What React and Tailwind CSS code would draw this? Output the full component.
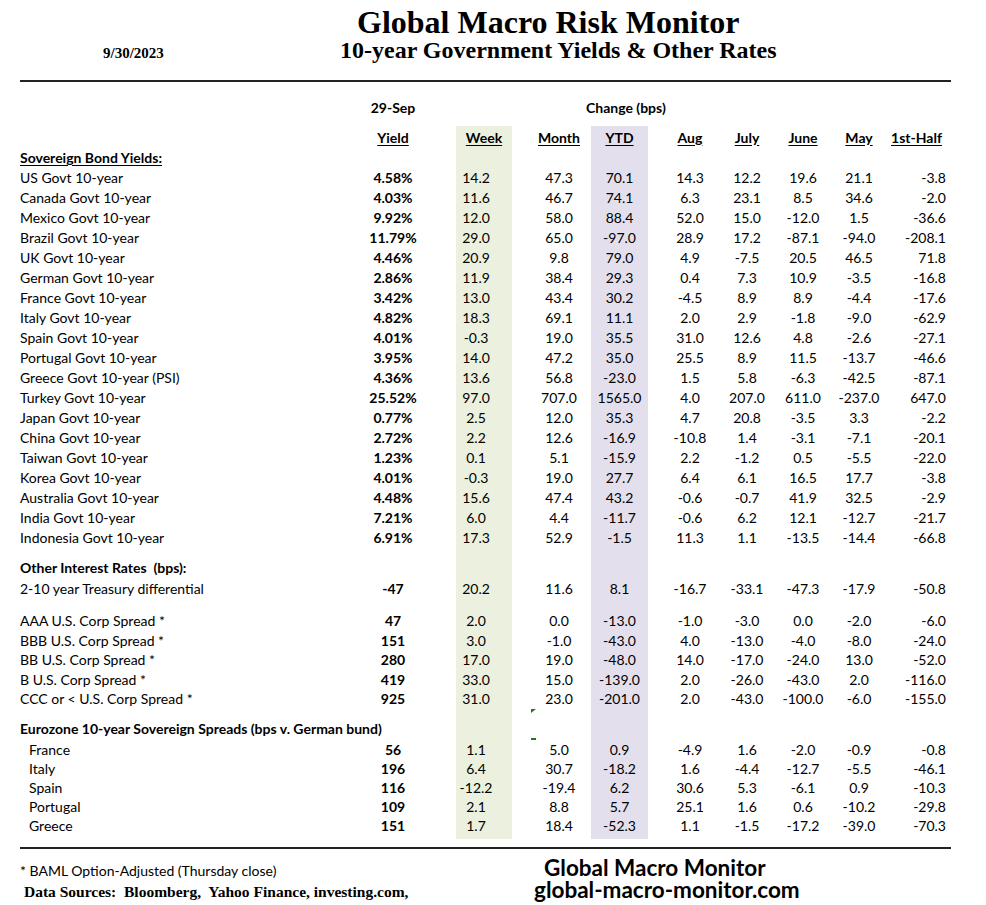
const sovereign = [
  ["US Govt 10-year", "4.58%", "14.2", "47.3", "70.1", "14.3", "12.2", "19.6", "21.1", "-3.8"],
  ["Canada Govt 10-year", "4.03%", "11.6", "46.7", "74.1", "6.3", "23.1", "8.5", "34.6", "-2.0"],
  ["Mexico Govt 10-year", "9.92%", "12.0", "58.0", "88.4", "52.0", "15.0", "-12.0", "1.5", "-36.6"],
  ["Brazil Govt 10-year", "11.79%", "29.0", "65.0", "-97.0", "28.9", "17.2", "-87.1", "-94.0", "-208.1"],
  ["UK Govt 10-year", "4.46%", "20.9", "9.8", "79.0", "4.9", "-7.5", "20.5", "46.5", "71.8"],
  ["German Govt 10-year", "2.86%", "11.9", "38.4", "29.3", "0.4", "7.3", "10.9", "-3.5", "-16.8"],
  ["France Govt 10-year", "3.42%", "13.0", "43.4", "30.2", "-4.5", "8.9", "8.9", "-4.4", "-17.6"],
  ["Italy Govt 10-year", "4.82%", "18.3", "69.1", "11.1", "2.0", "2.9", "-1.8", "-9.0", "-62.9"],
  ["Spain Govt 10-year", "4.01%", "-0.3", "19.0", "35.5", "31.0", "12.6", "4.8", "-2.6", "-27.1"],
  ["Portugal Govt 10-year", "3.95%", "14.0", "47.2", "35.0", "25.5", "8.9", "11.5", "-13.7", "-46.6"],
  ["Greece Govt 10-year (PSI)", "4.36%", "13.6", "56.8", "-23.0", "1.5", "5.8", "-6.3", "-42.5", "-87.1"],
  ["Turkey Govt 10-year", "25.52%", "97.0", "707.0", "1565.0", "4.0", "207.0", "611.0", "-237.0", "647.0"],
  ["Japan Govt 10-year", "0.77%", "2.5", "12.0", "35.3", "4.7", "20.8", "-3.5", "3.3", "-2.2"],
  ["China Govt 10-year", "2.72%", "2.2", "12.6", "-16.9", "-10.8", "1.4", "-3.1", "-7.1", "-20.1"],
  ["Taiwan Govt 10-year", "1.23%", "0.1", "5.1", "-15.9", "2.2", "-1.2", "0.5", "-5.5", "-22.0"],
  ["Korea Govt 10-year", "4.01%", "-0.3", "19.0", "27.7", "6.4", "6.1", "16.5", "17.7", "-3.8"],
  ["Australia Govt 10-year", "4.48%", "15.6", "47.4", "43.2", "-0.6", "-0.7", "41.9", "32.5", "-2.9"],
  ["India Govt 10-year", "7.21%", "6.0", "4.4", "-11.7", "-0.6", "6.2", "12.1", "-12.7", "-21.7"],
  ["Indonesia Govt 10-year", "6.91%", "17.3", "52.9", "-1.5", "11.3", "1.1", "-13.5", "-14.4", "-66.8"],
];

const corp = [
  ["AAA U.S. Corp Spread *", "47", "2.0", "0.0", "-13.0", "-1.0", "-3.0", "0.0", "-2.0", "-6.0"],
  ["BBB U.S. Corp Spread *", "151", "3.0", "-1.0", "-43.0", "4.0", "-13.0", "-4.0", "-8.0", "-24.0"],
  ["BB U.S. Corp Spread *", "280", "17.0", "19.0", "-48.0", "14.0", "-17.0", "-24.0", "13.0", "-52.0"],
  ["B U.S. Corp Spread *", "419", "33.0", "15.0", "-139.0", "2.0", "-26.0", "-43.0", "2.0", "-116.0"],
  ["CCC or < U.S. Corp Spread *", "925", "31.0", "23.0", "-201.0", "2.0", "-43.0", "-100.0", "-6.0", "-155.0"],
];

const euro = [
  ["France", "56", "1.1", "5.0", "0.9", "-4.9", "1.6", "-2.0", "-0.9", "-0.8"],
  ["Italy", "196", "6.4", "30.7", "-18.2", "1.6", "-4.4", "-12.7", "-5.5", "-46.1"],
  ["Spain", "116", "-12.2", "-19.4", "6.2", "30.6", "5.3", "-6.1", "0.9", "-10.3"],
  ["Portugal", "109", "2.1", "8.8", "5.7", "25.1", "1.6", "0.6", "-10.2", "-29.8"],
  ["Greece", "151", "1.7", "18.4", "-52.3", "1.1", "-1.5", "-17.2", "-39.0", "-70.3"],
];

const cell = "shrink-0 self-stretch flex items-center justify-center";

function Row({ r = [], h, labelCls = "", head = false, marker }) {
  const [label, yld, week, month, ytd, aug, july, june, may, half] = r;
  return (
    <div className={`flex ${h}`}>
      <div className={`w-[345px] shrink-0 flex items-center whitespace-pre ${labelCls}`}>{label}</div>
      <div className={`w-[56px] font-bold ${cell}`}>{yld}</div>
      <div className={`ml-[35px] w-[56px] bg-[#ebf1de] ${cell} ${head ? "" : "pr-4"}`}>{week}</div>
      <div className={`relative ml-[19px] w-[56px] ${cell}`}>
        {marker === "tri" && (
          <span className="absolute left-0 top-0 w-0 h-0 border-t-[4px] border-r-[5px] border-t-[#1e7b1e] border-r-transparent" />
        )}
        {marker === "dash" && <span className="absolute left-0 -top-[2px] w-[5px] h-[2px] bg-[#1e7b1e]" />}
        {month}
      </div>
      <div className={`ml-[4px] w-[57px] bg-[#e4dfec] ${cell}`}>{ytd}</div>
      <div className={`ml-[14px] w-[56px] ${cell}`}>{aug}</div>
      <div className={`ml-[1px] w-[56px] ${cell}`}>{july}</div>
      <div className={`w-[56px] ${cell}`}>{june}</div>
      <div className={`w-[56px] ${cell}`}>{may}</div>
      <div className={`w-[59px] shrink-0 self-stretch flex items-center ${head ? "justify-center" : "justify-end"}`}>{half}</div>
    </div>
  );
}

const U = ({ children }) => <span className="font-bold underline underline-offset-2">{children}</span>;

export default function App() {
  return (
    <div className="w-[986px] h-[905px] bg-white text-black overflow-hidden font-['Lato',sans-serif] text-[14px]">
      {/* title block */}
      <div className="pt-[6px] font-['Liberation_Serif',serif] font-bold">
        <div className="pl-[357px] text-[32px] leading-[32px]">Global Macro Risk Monitor</div>
        <div className="flex items-baseline">
          <div className="pl-[103px] w-[340px] text-[15px] leading-[24px]">9/30/2023</div>
          <div className="text-[24px] leading-[24px]">10-year Government Yields &amp; Other Rates</div>
        </div>
      </div>
      <div className="mt-[15px] mx-[20px] w-[931px] h-[2px] bg-[#222]" />

      <div className="pl-[20px]">
        <div className="mt-[15px] flex h-5 items-center font-bold">
          <div className="w-[345px] shrink-0" />
          <div className="w-[56px] shrink-0 text-center">29-Sep</div>
          <div className="ml-[165px]">Change (bps)</div>
        </div>

        <div className="mt-[9px]">
          <Row
            h="h-[22px]"
            head
            r={["", <U>Yield</U>, <U>Week</U>, <U>Month</U>, <U>YTD</U>, <U>Aug</U>, <U>July</U>, <U>June</U>, <U>May</U>, <U>1st-Half</U>]}
          />
          <Row h="h-[19px]" r={["Sovereign Bond Yields:"]} labelCls="font-bold underline underline-offset-2" />
          {sovereign.map((r) => (
            <Row key={r[0]} h="h-5" r={r} />
          ))}
          <Row h="h-[9px]" />
          <Row h="h-[22px]" r={["Other Interest Rates  (bps):"]} labelCls="font-bold" />
          <Row h="h-5" r={["2-10 year Treasury differential", "-47", "20.2", "11.6", "8.1", "-16.7", "-33.1", "-47.3", "-17.9", "-50.8"]} />
          <Row h="h-[13px]" />
          {corp.map((r) => (
            <Row key={r[0]} h="h-[19.5px]" r={r} />
          ))}
          <Row h="h-[9.5px]" marker="tri" />
          <Row h="h-[21.5px]" r={["Eurozone 10-year Sovereign Spreads (bps v. German bund)"]} labelCls="font-bold" />
          {euro.map((r, i) => (
            <Row key={r[0]} h="h-[19px]" r={r} labelCls="pl-[9px]" marker={i === 0 ? "dash" : undefined} />
          ))}
          <Row h="h-[4.5px]" />
        </div>
      </div>

      <div className="mt-[8px] mx-[20px] w-[931px] h-[2px] bg-[#222]" />

      <div className="flex">
        <div className="pl-[20px] w-[534px] pt-[12px]">
          <div className="leading-[20px]">* BAML Option-Adjusted (Thursday close)</div>
          <div className="pl-[4px] mt-[1px] leading-[20px] font-['Liberation_Serif',serif] font-bold text-[15.5px] whitespace-pre">
            Data Sources:  Bloomberg,  Yahoo Finance, investing.com,
          </div>
        </div>
        <div className="pt-[8px] font-bold text-[22.5px] leading-[22px]">
          <div className="pl-[10px]">Global Macro Monitor</div>
          <div>global-macro-monitor.com</div>
        </div>
      </div>
    </div>
  );
}
